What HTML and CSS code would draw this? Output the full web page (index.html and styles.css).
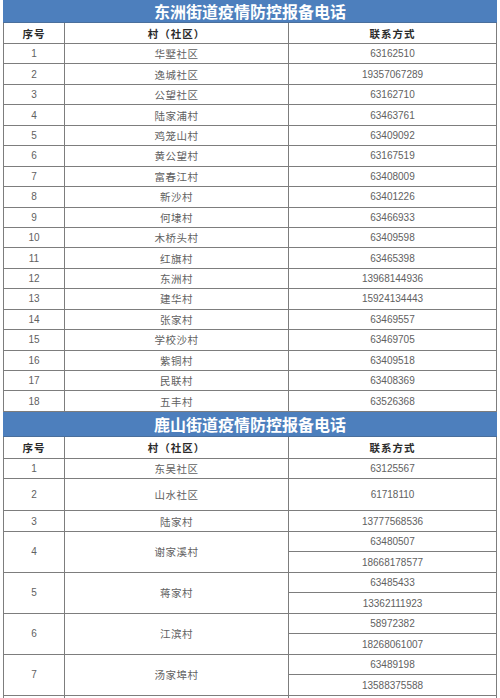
FILE: index.html
```html
<!DOCTYPE html>
<html lang="zh">
<head>
<meta charset="utf-8">
<title>疫情防控报备电话</title>
<link rel="stylesheet" href="styles.css">
</head>
<body>
<div class="sheet">
  <div class="banner first">东洲街道疫情防控报备电话</div>
  <div class="row hd"><div class="c">序号</div><div class="c">村（社区）</div><div class="c">联系方式</div></div>
  <div class="row"><div class="c">1</div><div class="c n">华墅社区</div><div class="c">63162510</div></div>
  <div class="row"><div class="c">2</div><div class="c n">逸城社区</div><div class="c">19357067289</div></div>
  <div class="row"><div class="c">3</div><div class="c n">公望社区</div><div class="c">63162710</div></div>
  <div class="row"><div class="c">4</div><div class="c n">陆家浦村</div><div class="c">63463761</div></div>
  <div class="row"><div class="c">5</div><div class="c n">鸡笼山村</div><div class="c">63409092</div></div>
  <div class="row"><div class="c">6</div><div class="c n">黄公望村</div><div class="c">63167519</div></div>
  <div class="row"><div class="c">7</div><div class="c n">富春江村</div><div class="c">63408009</div></div>
  <div class="row"><div class="c">8</div><div class="c n">新沙村</div><div class="c">63401226</div></div>
  <div class="row"><div class="c">9</div><div class="c n">何埭村</div><div class="c">63466933</div></div>
  <div class="row"><div class="c">10</div><div class="c n">木桥头村</div><div class="c">63409598</div></div>
  <div class="row"><div class="c">11</div><div class="c n">红旗村</div><div class="c">63465398</div></div>
  <div class="row"><div class="c">12</div><div class="c n">东洲村</div><div class="c">13968144936</div></div>
  <div class="row"><div class="c">13</div><div class="c n">建华村</div><div class="c">15924134443</div></div>
  <div class="row"><div class="c">14</div><div class="c n">张家村</div><div class="c">63469557</div></div>
  <div class="row"><div class="c">15</div><div class="c n">学校沙村</div><div class="c">63469705</div></div>
  <div class="row"><div class="c">16</div><div class="c n">紫铜村</div><div class="c">63409518</div></div>
  <div class="row"><div class="c">17</div><div class="c n">民联村</div><div class="c">63408369</div></div>
  <div class="row"><div class="c">18</div><div class="c n">五丰村</div><div class="c">63526368</div></div>

  <div class="banner second">鹿山街道疫情防控报备电话</div>
  <div class="row hd hd2"><div class="c">序号</div><div class="c">村（社区）</div><div class="c">联系方式</div></div>
  <div class="row r1"><div class="c">1</div><div class="c n">东吴社区</div><div class="c">63125567</div></div>
  <div class="row tall"><div class="c">2</div><div class="c n">山水社区</div><div class="c">61718110</div></div>
  <div class="row r3"><div class="c">3</div><div class="c n">陆家村</div><div class="c">13777568536</div></div>
  <div class="row dbl"><div class="c">4</div><div class="c n">谢家溪村</div><div class="c multi"><div class="sub">63480507</div><div class="sub">18668178577</div></div></div>
  <div class="row dbl"><div class="c">5</div><div class="c n">蒋家村</div><div class="c multi"><div class="sub">63485433</div><div class="sub">13362111923</div></div></div>
  <div class="row dbl"><div class="c">6</div><div class="c n">江滨村</div><div class="c multi"><div class="sub">58972382</div><div class="sub">18268061007</div></div></div>
  <div class="row dbl"><div class="c">7</div><div class="c n">汤家埠村</div><div class="c multi"><div class="sub">63489198</div><div class="sub">13588375588</div></div></div>
  <div class="row"><div class="c"></div><div class="c n"></div><div class="c"></div></div>
</div>
</body>
</html>
```

FILE: styles.css
```css
html, body {
  margin: 0;
  padding: 0;
  background: #ffffff;
}

body {
  font-family: "Liberation Sans", "Noto Sans CJK SC", sans-serif;
  font-size: 10px;
  color: #616161;
}

.sheet {
  margin-left: 3px;
  width: 494px;
  box-sizing: border-box;
  border-left: 1px solid #7d7d7d;
  border-right: 1px solid #7d7d7d;
}

.banner {
  margin: 0 -1px;
  background: #4d7fbd;
  color: #ffffff;
  font-family: "Noto Sans CJK SC", sans-serif;
  font-weight: 700;
  font-size: 16px;
  display: flex;
  align-items: center;
  justify-content: center;
  box-sizing: border-box;
  border-bottom: 1px solid #4a6f9c;
}

.banner.first {
  height: 23px;
}

.banner.second {
  height: 25px;
}

.row {
  display: grid;
  grid-template-columns: 61px 224px 1fr;
  height: 20.44px;
  box-sizing: border-box;
  border-bottom: 1px solid #7d7d7d;
}

.row.hd {
  height: 21px;
  color: #2b2b2b;
  font-weight: 700;
  font-family: "Noto Sans CJK SC", sans-serif;
  font-size: 10.5px;
  letter-spacing: 1px;
}

.row.hd2 {
  height: 21.7px;
}

.row.r1 {
  height: 20px;
}

.row.tall {
  height: 32.6px;
}

.row.r3 {
  height: 20.7px;
}

.row.dbl {
  height: 41px;
}

.c {
  display: flex;
  align-items: center;
  justify-content: center;
  box-sizing: border-box;
  min-width: 0;
}

.c:nth-child(1),
.c:nth-child(2) {
  border-right: 1px solid #7d7d7d;
}

.c.n {
  font-size: 10.5px;
  letter-spacing: 0.5px;
  font-family: "Noto Sans CJK SC", sans-serif;
}

.c.multi {
  flex-direction: column;
  align-items: stretch;
}

.sub {
  flex: 1;
  display: flex;
  align-items: center;
  justify-content: center;
}

.sub + .sub {
  border-top: 1px solid #7d7d7d;
}
```
